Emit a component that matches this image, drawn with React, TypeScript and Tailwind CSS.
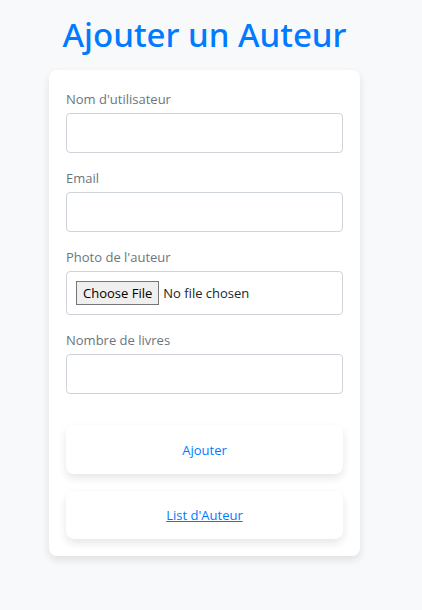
import type { InputHTMLAttributes } from "react";

type FieldProps = InputHTMLAttributes<HTMLInputElement> & {
  id: string;
  label: string;
};

const textBox = "h-10 px-[9px]";
const fileBox =
  "h-11 px-[9px] py-[9px] file:mr-1 file:h-6 file:rounded-none file:border file:border-solid file:border-[#767676] file:bg-[#efefef] file:px-1.5 file:pt-0.5 file:text-[13px] file:text-black";

function Field({ id, label, type, ...rest }: FieldProps) {
  return (
    <div className="mb-[13px] flex flex-col">
      <label htmlFor={id} className="mb-[3px] pt-0.5 text-[13px] leading-[21px] text-[#6c757d]">
        {label}
      </label>
      <input
        id={id}
        name={id}
        type={type}
        className={`w-full rounded-[4px] border border-[#ced4da] bg-white text-[13px] text-[#212529] outline-none focus:border-[#007bff] ${type === "file" ? fileBox : textBox}`}
        {...rest}
      />
    </div>
  );
}

export default function App() {
  return (
    <main className="min-h-screen bg-[#f8f9fa] pr-[13px] font-['Open_Sans','Noto_Sans',sans-serif]">
      <h1 className="pt-[13px] pb-3.5 text-center font-['Noto_Sans',sans-serif] text-[33px] leading-[43px] font-medium whitespace-nowrap text-[#007bff]">
        Ajouter un Auteur
      </h1>
      <form
        className="mx-[49px] rounded-[8px] bg-white p-[17px] shadow-[0_4px_8px_rgba(0,0,0,0.1)]"
        onSubmit={(event) => event.preventDefault()}
      >
        <Field id="username" label="Nom d'utilisateur" type="text" />
        <Field id="email" label="Email" type="email" />
        <Field id="photo" label="Photo de l'auteur" type="file" />
        <Field id="books" label="Nombre de livres" type="number" />
        <div className="flex flex-col gap-[17px] pt-[18px]">
          <button
            type="submit"
            className="h-[49px] rounded-[8px] bg-white pt-0.5 text-[13px] text-[#007bff] shadow-[0_4px_8px_rgba(0,0,0,0.1)]"
          >
            Ajouter
          </button>
          <a
            href="#auteurs"
            className="flex h-12 items-center justify-center rounded-[8px] bg-white pt-0.5 text-[13px] text-[#007bff] underline shadow-[0_4px_8px_rgba(0,0,0,0.1)]"
          >
            List d'Auteur
          </a>
        </div>
      </form>
    </main>
  );
}
